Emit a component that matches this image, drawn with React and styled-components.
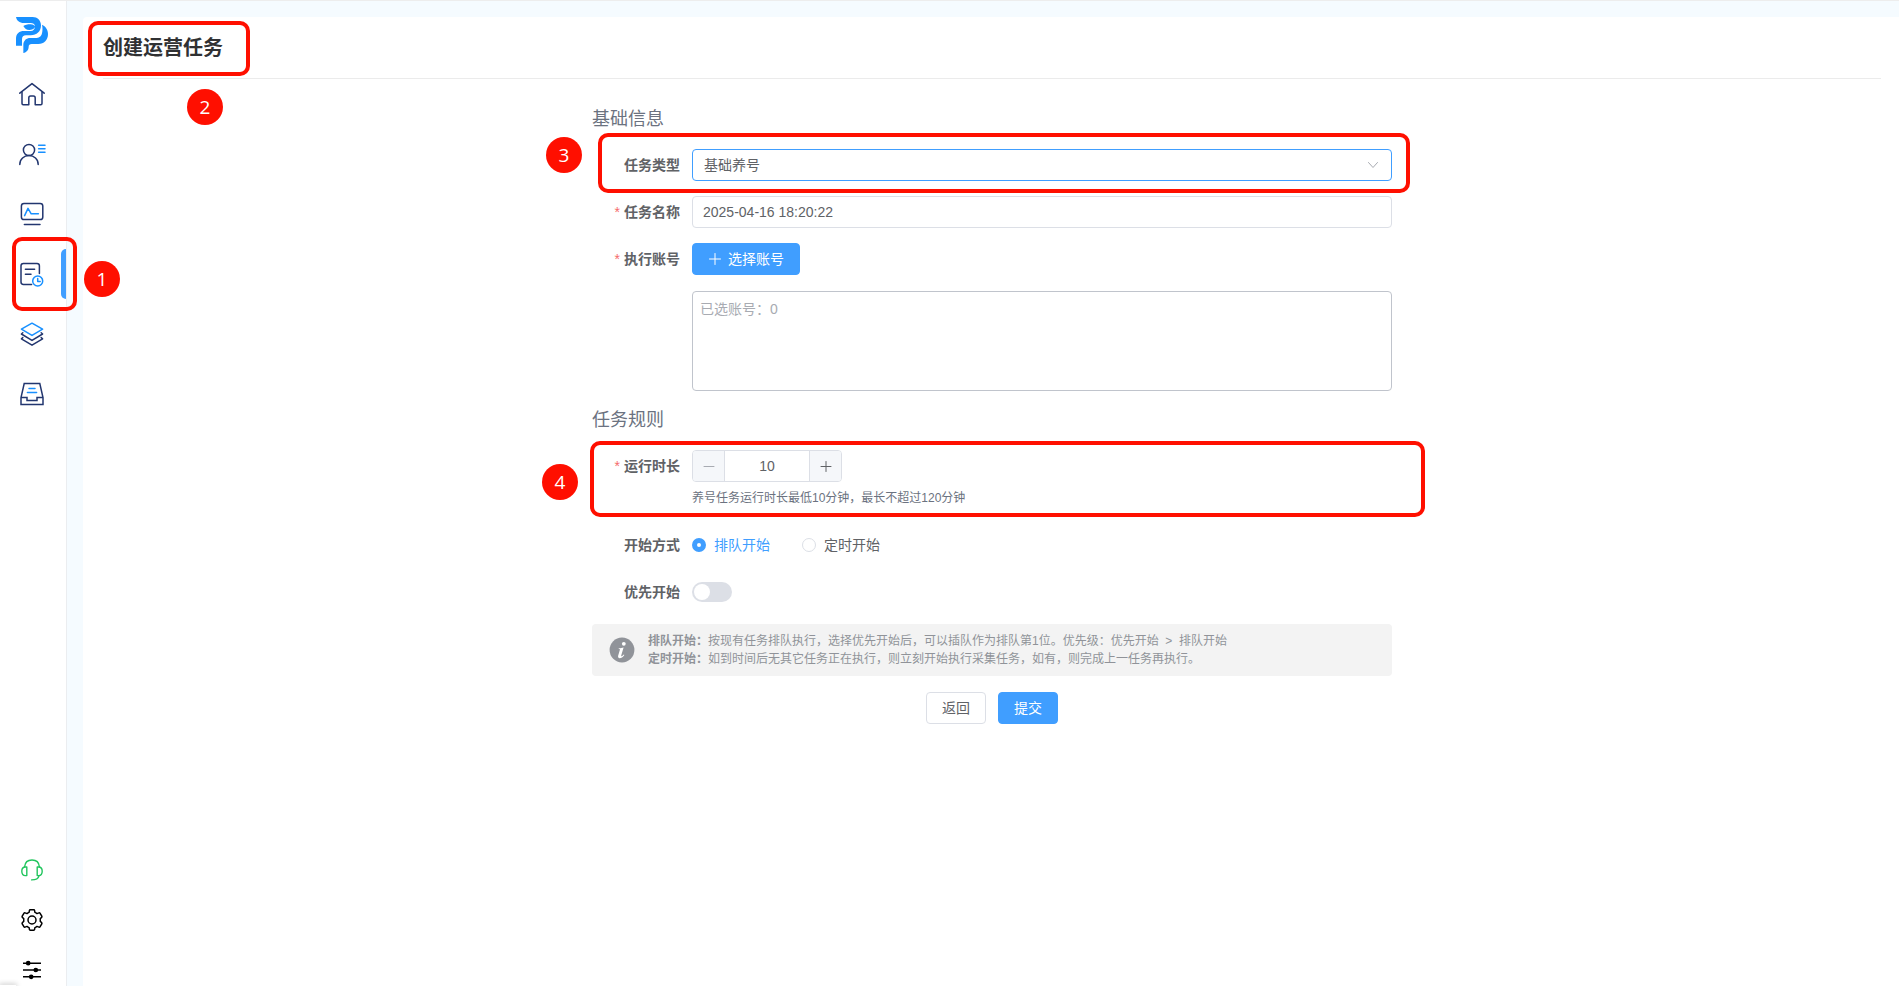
import React, { useState } from 'react'
import styled, { createGlobalStyle, css } from 'styled-components'

const NAVY = '#22366f'
const BLUE = '#1890ff'

const GlobalStyle = createGlobalStyle`
  * {
    box-sizing: border-box;
  }
  body {
    margin: 0;
    background: #fff;
    color: #606266;
    font-family: "Liberation Sans", "Noto Sans CJK SC", sans-serif;
    font-size: 14px;
  }
  button, input, select, textarea {
    font: inherit;
    color: inherit;
  }
`

const Layout = styled.div`
  display: flex;
  min-height: 100vh;
  border-top: 1px solid #ededed;
`

const Sidebar = styled.aside`
  position: relative;
  display: flex;
  flex-direction: column;
  flex: none;
  width: 67px;
  border-right: 1px solid #ebedf0;
  background: #fff;
`

const Logo = styled.a`
  display: flex;
  justify-content: center;
  padding: 16px 2px 11px 0;
`

const Nav = styled.nav`
  display: flex;
  flex-direction: column;
`

const NavItem = styled.a`
  position: relative;
  display: flex;
  align-items: center;
  justify-content: center;
  height: 60px;
  padding-right: 2px;

  ${({ $active }) => $active && css`
    &::after {
      content: '';
      position: absolute;
      top: 5px;
      right: 0;
      width: 5px;
      height: 50px;
      border-radius: 5px 0 0 5px;
      background: #409eff;
    }
  `}
`

const Tools = styled.div`
  display: flex;
  flex-direction: column;
  gap: 18px;
  margin-top: auto;
`

const ToolButton = styled.button`
  display: flex;
  align-items: center;
  justify-content: center;
  height: 32px;
  padding: 0 2px 0 0;
  border: 0;
  background: none;
  cursor: pointer;
`

const Main = styled.main`
  display: flex;
  flex: 1;
  padding: 16px 0 0 16px;
  background: #f5fbff;
`

const Panel = styled.section`
  flex: 1;
  padding: 0 18px 0 20px;
  border-radius: 4px 0 0 0;
  background: #fff;
`

const Header = styled.header`
  display: flex;
  align-items: center;
  height: 62px;
  padding-top: 2px;
  border-bottom: 1px solid #ebebeb;
`

const Title = styled.h1`
  margin: 0;
  color: #303133;
  font-size: 20px;
  line-height: 29px;
`

const Form = styled.form`
  display: flex;
  flex-direction: column;
  max-width: 800px;
  margin: 0 auto;
  padding: 28px 0;
`

const SectionTitle = styled.h2`
  margin: 0 0 18px;
  color: #6b7280;
  font-size: 18px;
  font-weight: 400;
  line-height: 24px;
`

const Fields = styled.div`
  display: flex;
  flex-direction: column;
  gap: 15px;
  margin-bottom: ${({ $space }) => $space}px;
`

const Row = styled.div`
  position: relative;
  display: flex;
  align-items: flex-start;
`

const Label = styled.label`
  flex: none;
  width: 100px;
  padding-right: 12px;
  font-weight: 700;
  line-height: 32px;
  text-align: right;

  ${({ $required }) => $required && css`
    &::before {
      content: '*';
      margin-right: 4px;
      color: #f56c6c;
      font-weight: 400;
    }
  `}
`

const Control = styled.div`
  display: flex;
  flex: 1;
  flex-direction: column;
  align-items: flex-start;
`

const SelectBox = styled.div`
  position: relative;
  width: 100%;

  svg {
    position: absolute;
    top: 9px;
    right: 12px;
    pointer-events: none;
  }
`

const fieldStyle = css`
  display: block;
  width: 100%;
  border: 1px solid #dcdfe6;
  border-radius: 4px;
  background: #fff;
  outline: none;
`

const Select = styled.select`
  ${fieldStyle}
  height: 32px;
  padding: 0 32px 0 11px;
  border-color: #409eff;
  appearance: none;
`

const Input = styled.input`
  ${fieldStyle}
  height: 32px;
  padding: 0 11px 0 10px;
`

const Textarea = styled.textarea`
  ${fieldStyle}
  height: 100px;
  margin-top: 16px;
  padding: 6px 7px;
  border-color: #c0c4cc;
  line-height: 22px;
  resize: none;

  &::placeholder {
    color: #a8abb2;
  }
`

const Button = styled.button`
  display: inline-flex;
  align-items: center;
  gap: 6px;
  height: 32px;
  padding: 0 15px;
  border: 1px solid ${({ $primary }) => ($primary ? '#409eff' : '#dcdfe6')};
  border-radius: 4px;
  background: ${({ $primary }) => ($primary ? '#409eff' : '#fff')};
  color: ${({ $primary }) => ($primary ? '#fff' : '#606266')};
  line-height: 30px;
  cursor: pointer;
`

const Stepper = styled.div`
  display: flex;
  width: 150px;
  height: 32px;
  overflow: hidden;
  border: 1px solid #dcdfe6;
  border-radius: 4px;
`

const StepButton = styled.button`
  display: flex;
  align-items: center;
  justify-content: center;
  flex: none;
  width: 31px;
  padding: 0;
  border: 0;
  background: #f5f7fa;
  color: #606266;
  cursor: pointer;

  &:disabled {
    color: #a8abb2;
    cursor: not-allowed;
  }
`

const StepInput = styled.input`
  flex: 1;
  min-width: 0;
  padding: 0;
  border: 0;
  border-left: 1px solid #dcdfe6;
  border-right: 1px solid #dcdfe6;
  outline: none;
  text-align: center;
`

const Hint = styled.p`
  margin: 0;
  padding: 6px 0;
  color: #6b7280;
  font-size: 12px;
  line-height: 20px;
`

const RadioGroup = styled.div`
  display: flex;
  gap: 32px;
`

const RadioLabel = styled.label`
  display: flex;
  align-items: center;
  gap: 8px;
  height: 32px;
  color: ${({ $checked }) => ($checked ? '#409eff' : '#606266')};
  line-height: 32px;
  cursor: pointer;
`

const Radio = styled.input`
  width: 14px;
  height: 14px;
  margin: 0;
  border: 1px solid #dcdfe6;
  border-radius: 50%;
  background: #fff;
  appearance: none;

  &:checked {
    border: 5px solid #409eff;
  }
`

const Switch = styled.input`
  width: 40px;
  height: 20px;
  margin: 6px 0;
  padding: 2px;
  border-radius: 10px;
  background: ${({ checked }) => (checked ? '#409eff' : '#dcdfe6')};
  appearance: none;
  cursor: pointer;

  &::before {
    content: '';
    display: block;
    width: 16px;
    height: 16px;
    margin-left: ${({ checked }) => (checked ? '20px' : '0')};
    border-radius: 50%;
    background: #fff;
  }
`

const Notice = styled.div`
  display: flex;
  align-items: center;
  gap: 13px;
  padding: 8px 16px 8px 17px;
  border-radius: 4px;
  background: #f3f3f3;
  color: #909399;
  font-size: 12px;
  line-height: 18px;

  p {
    margin: 0;
  }
`

const Actions = styled.div`
  display: flex;
  justify-content: center;
  gap: 12px;
  margin-top: 16px;
`

// highlight frame laid over the thing it points at
const Mark = styled.span`
  position: absolute;
  top: ${({ $top }) => $top}px;
  right: ${({ $right }) => $right}px;
  bottom: ${({ $bottom }) => $bottom}px;
  left: ${({ $left }) => $left}px;
  z-index: 2;
  border: 4px solid #ff0f00;
  border-radius: 10px;
  pointer-events: none;
`

const Badge = styled.span`
  position: absolute;
  top: ${({ $top }) => $top}px;
  left: ${({ $left }) => $left}px;
  z-index: 2;
  width: 36px;
  height: 36px;
  border-radius: 50%;
  background: #ff0f00;
  color: #fff;
  font-family: "Open Sans", "Noto Sans", sans-serif;
  font-size: 19px;
  line-height: 36px;
  text-align: center;
`

const TitleBox = styled.div`
  position: relative;
`

const CornerShade = styled.div`
  position: absolute;
  bottom: 0;
  left: 0;
  width: 16px;
  height: 1px;
  box-shadow: 0 0 5px 1px rgba(0, 0, 0, 0.25);
`

const Icon = ({ size = 28, color = NAVY, width = 1.5, children }) => (
  <svg
    width={size}
    height={size}
    viewBox={`0 0 ${size} ${size}`}
    fill="none"
    stroke={color}
    strokeWidth={width}
    strokeLinejoin="round"
    strokeLinecap="round"
    aria-hidden="true"
  >
    {children}
  </svg>
)

const LogoIcon = () => (
  <svg width="32" height="36" viewBox="0 0 96 108" fill={BLUE} aria-hidden="true">
    <path d="M0 0H50C64 0 75 10 75 25C75 44 62 55 44 55H30C22 55 18 59 18 67V86H0V65C0 50 10 42 24 42H44C52 42 56 37 57 30C53 37 47 39 40 39C31 39 27 35 22 27C27 24 34 22 44 22C50 22 54 24 57 28C56 21 51 18 44 18H24C10 18 2 11 0 0Z" />
    <path d="M78 23C89 28 96 38 96 51C96 69 84 81 67 81H47C41 81 38 84 38 89C38 98 32 106 22 108V84C22 71 31 63 43 63H62C71 63 77 57 78 49C80 41 80 32 78 23Z" />
  </svg>
)

const HomeIcon = () => (
  <Icon>
    <path d="M1.8 13.2L14 3.6L26.2 13.2" />
    <path d="M4 12V23.6Q4 24.8 5.2 24.8H10.8V18Q10.8 16 12.6 16H15.4Q17.2 16 17.2 18V24.8H22.8Q24 24.8 24 23.6V12" />
  </Icon>
)

const UserIcon = () => (
  <Icon>
    <circle cx="11" cy="10" r="5.6" />
    <path d="M1.8 24.4C1.8 19 6 15.6 11 15.6S20.2 19 20.2 24.4" />
    <path d="M20.6 5.2H27M20.6 8.7H27M20.6 12.2H27" stroke={BLUE} />
  </Icon>
)

const MonitorIcon = () => (
  <Icon>
    <rect x="3.4" y="3.4" width="21.4" height="16.2" rx="2.6" />
    <path d="M6.6 15.6L10 8.4L13.2 13.8H20.4" stroke={BLUE} />
    <path d="M6.4 24.6H22" />
  </Icon>
)

const TaskIcon = () => (
  <Icon>
    <path d="M13.6 24.4H5.4Q3 24.4 3 22V5.8Q3 3.4 5.4 3.4H19Q21.4 3.4 21.4 5.8V13.6" />
    <path d="M7.4 9.2H16.6M7.4 14.2H13" width="1.8" />
    <circle cx="19.7" cy="21" r="5" stroke={BLUE} />
    <path d="M19.7 18.4V21.4H22.2" stroke={BLUE} />
  </Icon>
)

const LayersIcon = () => (
  <Icon>
    <path d="M4.8 12.8L3.4 14L14 20.4L24.6 14L23.2 12.8M4.8 17.6L3.4 18.8L14 25.2L24.6 18.8L23.2 17.6" />
    <path d="M14 3.2L24.6 9.2L14 15.4L3.4 9.2Z" stroke={BLUE} />
  </Icon>
)

const InboxIcon = () => (
  <Icon>
    <path d="M3 17.6L6.2 3.6H21.8L25 17.6V24.4H3ZM3 17.6H9V20.6H19V17.6H25" strokeLinejoin="miter" />
    <path d="M11 8.4H17M9.4 12.6H18.6" stroke={BLUE} />
  </Icon>
)

const HeadsetIcon = () => (
  <Icon size={24} color="#22c55e" width={1.4}>
    <path d="M4.6 8.8C5 4.4 8 2 12 2S19 4.4 19.4 8.8" />
    <path d="M6.8 9V17.6H5.4C3.2 17.6 1.8 15.6 1.8 13.3S3.2 9 5.4 9ZM17.2 9V17.6H18.6C20.8 17.6 22.2 15.6 22.2 13.3S20.8 9 18.6 9Z" />
    <path d="M19 17.8C18.4 20.6 16 21.9 11.6 21.9" />
  </Icon>
)

const GearIcon = () => (
  <Icon size={24} color="#000">
    <path d="M9.4 2.6Q9.5 1.8 10.3 1.8H13.7Q14.5 1.8 14.6 2.6L14.9 4.4Q16 4.8 17 5.6L18.9 4.9Q19.7 4.6 20.1 5.3L21.8 8.2Q22.2 8.9 21.6 9.4L20.2 10.7Q20.4 12 20.2 13.3L21.6 14.6Q22.2 15.1 21.8 15.8L20.1 18.7Q19.7 19.4 18.9 19.1L17 18.4Q16 19.2 14.9 19.6L14.6 21.4Q14.5 22.2 13.7 22.2H10.3Q9.5 22.2 9.4 21.4L9.1 19.6Q8 19.2 7 18.4L5.1 19.1Q4.3 19.4 3.9 18.7L2.2 15.8Q1.8 15.1 2.4 14.6L3.8 13.3Q3.6 12 3.8 10.7L2.4 9.4Q1.8 8.9 2.2 8.2L3.9 5.3Q4.3 4.6 5.1 4.9L7 5.6Q8 4.8 9.1 4.4Z" />
    <circle cx="12" cy="12" r="4" />
  </Icon>
)

const SlidersIcon = () => (
  <Icon size={24} color="#000">
    <path d="M3 5.2H21M3 12H21M3 18.8H21" strokeLinecap="butt" />
    <circle cx="8.2" cy="5.2" r="1.6" fill="#000" />
    <circle cx="15.8" cy="12" r="1.6" fill="#000" />
    <circle cx="11.2" cy="18.8" r="1.6" fill="#000" />
  </Icon>
)

const InfoIcon = () => (
  <svg width="26" height="26" viewBox="0 0 26 26" aria-hidden="true">
    <circle cx="13" cy="13" r="12.4" fill="#909399" />
    <circle cx="14.8" cy="6.8" r="1.9" fill="#fff" />
    <path
      d="M9.8 11.2C11.8 11.2 12.8 10.9 14.6 10.4L12.2 18.6C12 19.4 12.6 19.5 13.2 19L14.8 17.4L15.4 17.9C13.8 20.2 12.2 21.2 10.8 21.2C9.2 21.2 8.8 20 9.2 18.6L10.9 12.8C11.1 12.1 10.8 11.9 9.7 11.9Z"
      fill="#fff"
    />
  </svg>
)

const menu = [
  { name: '首页', icon: HomeIcon },
  { name: '账号', icon: UserIcon },
  { name: '监控', icon: MonitorIcon },
  { name: '任务', icon: TaskIcon, active: true },
  { name: '素材', icon: LayersIcon },
  { name: '收件箱', icon: InboxIcon },
]

const tools = [
  { name: '客服', icon: HeadsetIcon },
  { name: '设置', icon: GearIcon },
  { name: '偏好', icon: SlidersIcon },
]

const MIN = 10
const MAX = 120

function SideMenu() {
  return (
    <Sidebar>
      <Logo href="#" aria-label="主页">
        <LogoIcon />
      </Logo>
      <Nav>
        {menu.map(({ name, icon: ItemIcon, active }) => (
          <NavItem key={name} href="#" aria-label={name} $active={active}>
            <ItemIcon />
            {active && (
              <>
                <Mark $top={-7} $right={-11} $bottom={-7} $left={12} />
                <Badge $top={17} $left={84}>1</Badge>
              </>
            )}
          </NavItem>
        ))}
      </Nav>
      <Tools>
        {tools.map(({ name, icon: ToolIcon }) => (
          <ToolButton key={name} type="button" aria-label={name}>
            <ToolIcon />
          </ToolButton>
        ))}
      </Tools>
      <CornerShade />
    </Sidebar>
  )
}

function TaskForm() {
  const [name, setName] = useState('2025-04-16 18:20:22')
  const [minutes, setMinutes] = useState(MIN)
  const [mode, setMode] = useState('queue')
  const [priority, setPriority] = useState(false)

  return (
    <Form onSubmit={(e) => e.preventDefault()}>
      <SectionTitle>基础信息</SectionTitle>
      <Fields $space={17}>
        <Row>
          <Label htmlFor="type">任务类型</Label>
          <Control>
            <SelectBox>
              <Select id="type">
                <option>基础养号</option>
              </Select>
              <Icon size={14} color="#a8abb2" width={1}>
                <path d="M2.5 4.5L7 9.5L11.5 4.5" />
              </Icon>
            </SelectBox>
          </Control>
          <Mark $top={-16} $right={-18} $bottom={-12} $left={6} />
          <Badge $top={-12} $left={-46}>3</Badge>
        </Row>
        <Row>
          <Label htmlFor="name" $required>任务名称</Label>
          <Control>
            <Input id="name" value={name} onChange={(e) => setName(e.target.value)} />
          </Control>
        </Row>
        <Row>
          <Label htmlFor="accounts" $required>执行账号</Label>
          <Control>
            <Button type="button" $primary>
              <Icon size={14} color="#fff" width={1}>
                <path d="M7 1.5V12.5M1.5 7H12.5" />
              </Icon>
              选择账号
            </Button>
            <Textarea id="accounts" placeholder="已选账号：0" readOnly />
          </Control>
        </Row>
      </Fields>

      <SectionTitle>任务规则</SectionTitle>
      <Fields $space={16}>
        <Row>
          <Label htmlFor="minutes" $required>运行时长</Label>
          <Control>
            <Stepper>
              <StepButton
                type="button"
                aria-label="减少"
                disabled={minutes <= MIN}
                onClick={() => setMinutes(minutes - 1)}
              >
                <Icon size={14} color="currentColor" width={1}>
                  <path d="M2 7.5H12" />
                </Icon>
              </StepButton>
              <StepInput
                id="minutes"
                value={minutes}
                onChange={(e) => setMinutes(Number(e.target.value) || MIN)}
              />
              <StepButton
                type="button"
                aria-label="增加"
                disabled={minutes >= MAX}
                onClick={() => setMinutes(minutes + 1)}
              >
                <Icon size={14} color="currentColor" width={1}>
                  <path d="M2 7.5H12M7 2.5V12.5" />
                </Icon>
              </StepButton>
            </Stepper>
            <Hint>养号任务运行时长最低10分钟，最长不超过120分钟</Hint>
          </Control>
          <Mark $top={-9} $right={-33} $bottom={-3} $left={-2} />
          <Badge $top={14} $left={-50}>4</Badge>
        </Row>
        <Row>
          <Label as="span" id="mode">开始方式</Label>
          <RadioGroup role="radiogroup" aria-labelledby="mode">
            <RadioLabel $checked={mode === 'queue'}>
              <Radio type="radio" name="mode" checked={mode === 'queue'} onChange={() => setMode('queue')} />
              排队开始
            </RadioLabel>
            <RadioLabel $checked={mode === 'timer'}>
              <Radio type="radio" name="mode" checked={mode === 'timer'} onChange={() => setMode('timer')} />
              定时开始
            </RadioLabel>
          </RadioGroup>
        </Row>
        <Row>
          <Label htmlFor="priority">优先开始</Label>
          <Switch
            id="priority"
            type="checkbox"
            role="switch"
            checked={priority}
            onChange={(e) => setPriority(e.target.checked)}
          />
        </Row>
      </Fields>

      <Notice>
        <InfoIcon />
        <div>
          <p>
            <b>排队开始：</b>按现有任务排队执行，选择优先开始后，可以插队作为排队第1位。优先级：优先开始&nbsp; &gt; &nbsp;排队开始
          </p>
          <p>
            <b>定时开始：</b>如到时间后无其它任务正在执行，则立刻开始执行采集任务，如有，则完成上一任务再执行。
          </p>
        </div>
      </Notice>

      <Actions>
        <Button type="button">返回</Button>
        <Button type="submit" $primary>提交</Button>
      </Actions>
    </Form>
  )
}

function App() {
  return (
    <>
      <GlobalStyle />
      <Layout>
        <SideMenu />
        <Main>
          <Panel>
            <Header>
              <TitleBox>
                <Title>创建运营任务</Title>
                <Mark $top={-13} $right={-27} $bottom={-13} $left={-15} />
                <Badge $top={55} $left={84}>2</Badge>
              </TitleBox>
            </Header>
            <TaskForm />
          </Panel>
        </Main>
      </Layout>
    </>
  )
}

export default App
